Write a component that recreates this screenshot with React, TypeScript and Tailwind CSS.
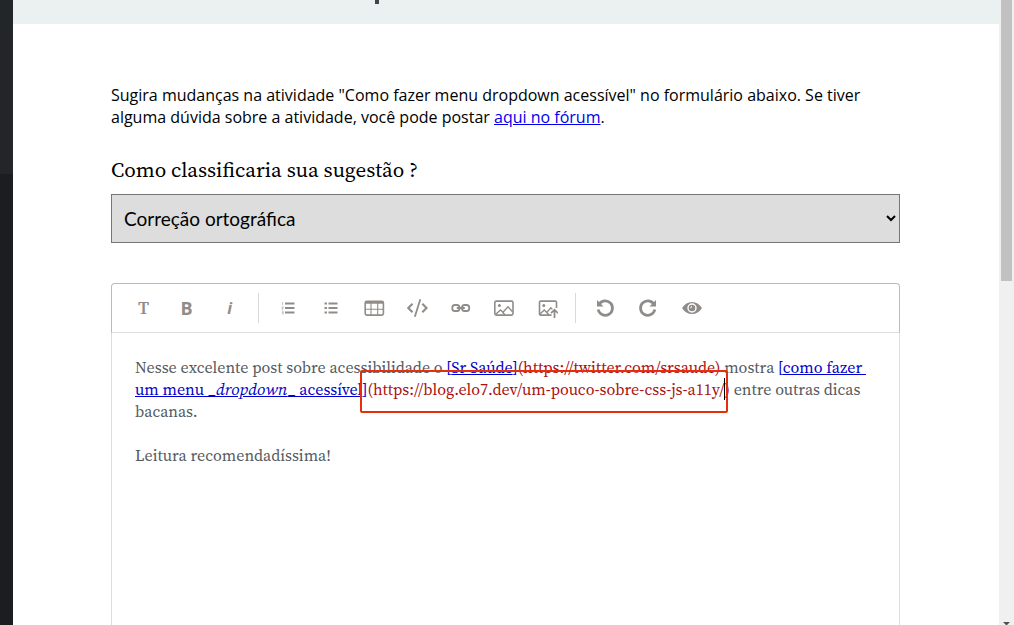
import type { ReactNode } from "react";

const serif = "font-['Source_Serif_Pro','Source_Serif_4','Liberation_Serif',serif]";

function Tool({ label, children }: { label: string; children: ReactNode }) {
  return (
    <button
      type="button"
      aria-label={label}
      className="flex h-[30px] w-[43px] shrink-0 items-center justify-center text-[#908c8a]"
    >
      {children}
    </button>
  );
}

function Icon({ children }: { children: ReactNode }) {
  return (
    <svg width="24" height="24" viewBox="0 0 24 24" fill="none" stroke="currentColor" strokeWidth="1.8" aria-hidden="true">
      {children}
    </svg>
  );
}

function Separator() {
  return <span className="mx-[7px] h-[30px] w-px shrink-0 bg-[#d9d9d9]" />;
}

function Toolbar() {
  return (
    <div
      role="toolbar"
      aria-label="Formatação"
      className="flex h-[50px] items-center overflow-hidden rounded-t border border-[#bbbbbb] border-b-[#dddddd] pl-[10px]"
    >
      <Tool label="Título">
        <span className={`${serif} text-lg font-semibold`}>T</span>
      </Tool>
      <Tool label="Negrito">
        <span className="font-['Open_Sans',sans-serif] text-lg font-bold">B</span>
      </Tool>
      <Tool label="Itálico">
        <span className="font-['Open_Sans',sans-serif] text-base font-bold italic">i</span>
      </Tool>
      <Separator />
      <Tool label="Lista numerada">
        <Icon>
          <path d="M9 7.500h9.500M9 12h9.500M9 16.500h9.500" />
          <path d="M6.600 6v3M5.800 10.800h1.400v1.100H6v1.200h1.400M5.800 15h1.400v3H5.800M6 16.500h1.200" strokeWidth=".5" />
        </Icon>
      </Tool>
      <Tool label="Lista">
        <Icon>
          <path d="M9.500 7.500h9M9.500 12h9M9.500 16.500h9M5.500 7.500h2.500M5.500 12h2.500M5.500 16.500h2.500" />
        </Icon>
      </Tool>
      <Tool label="Tabela">
        <Icon>
          <rect x="3.200" y="5.300" width="18.200" height="13.800" rx="1.600" strokeWidth="1.600" />
          <path d="M3.500 6.500h17.600" strokeWidth="2.600" />
          <path d="M3.500 13.200h17.600M9 7v12M15.700 7v12" strokeWidth="1.100" />
        </Icon>
      </Tool>
      <Tool label="Código">
        <Icon>
          <path d="M7.500 7.800 3.300 12l4.200 4.200M17.300 7.800l4.200 4.200-4.200 4.200" strokeWidth="2.100" />
          <path d="M15.300 3.200 9.800 20.800" />
        </Icon>
      </Tool>
      <Tool label="Link">
        <Icon>
          <rect x="4.300" y="9" width="7.200" height="6" rx="2.600" />
          <rect x="14" y="9" width="7.200" height="6" rx="2.600" />
          <path d="M8.800 12h8" />
        </Icon>
      </Tool>
      <Tool label="Imagem">
        <Icon>
          <rect x="3.800" y="5.100" width="18.200" height="14" rx="1.600" strokeWidth="1.600" />
          <circle cx="8.400" cy="9.500" r="1.500" fill="currentColor" stroke="none" />
          <path d="m4.500 18.500 5-4.500 2.500 2.200 5-5.500 4.700 5.300M11.500 16l2.500 3" strokeWidth="1.400" />
        </Icon>
      </Tool>
      <Tool label="Enviar imagem">
        <Icon>
          <path d="M17.500 19.100H6.700a1.200 1.200 0 0 1-1.200-1.200V6.300a1.200 1.200 0 0 1 1.200-1.200h14.600a1.200 1.200 0 0 1 1.200 1.200V12" strokeWidth="1.600" />
          <circle cx="9.800" cy="9.500" r="1.500" fill="currentColor" stroke="none" />
          <path d="m6 18 4.300-4 2.500 2.500 4-4.700 1.500 1.500M12.500 16l2.500 3" strokeWidth="1.400" />
          <path d="M20.500 22v-8M17 17.200l3.500-3.500 3.500 3.500" />
        </Icon>
      </Tool>
      <span className="mr-[7px] ml-2 h-[30px] w-px shrink-0 bg-[#d9d9d9]" />
      <Tool label="Desfazer">
        <Icon>
          <path d="M6 8.500A7.200 7.200 0 1 1 5.200 13.500" strokeWidth="2.700" />
          <path d="M4 4v6.500h6.500z" fill="currentColor" stroke="none" />
        </Icon>
      </Tool>
      <Tool label="Refazer">
        <Icon>
          <path d="M18 8.500A7.200 7.200 0 1 0 18.800 13.500" strokeWidth="2.700" />
          <path d="M20 4v6.500h-6.500z" fill="currentColor" stroke="none" />
        </Icon>
      </Tool>
      <Tool label="Visualizar">
        <Icon>
          <path
            fill="currentColor"
            stroke="none"
            fillRule="evenodd"
            d="M3 12c2.500-4 6-6 10-6s7.500 2 10 6c-2.500 4-6 6-10 6s-7.500-2-10-6ZM13 7.300a4.700 4.700 0 1 0 0 9.400 4.700 4.700 0 0 0 0-9.400Z"
          />
          <circle cx="13" cy="12" r="3.300" fill="currentColor" stroke="none" />
          <path d="M13 10.500a1.600 1.600 0 0 0-1.300 1.600" stroke="white" strokeWidth="1" />
        </Icon>
      </Tool>
    </div>
  );
}

function Editor() {
  return (
    <div
      role="textbox"
      aria-multiline="true"
      aria-label="Sua sugestão"
      className={`${serif} grow border-x border-[#dddddd] px-[23px] pt-[23px] text-base leading-[22px] text-[#535a60]`}
    >
      <p className="whitespace-nowrap">
        Nesse excelente post sobre acessibilidade o <span className="text-[#0000cc]">[<u>Sr Saúde</u>]</span>
        <span className="text-[#aa1111]">(https://twitter.com/srsaude)</span> mostra{" "}
        <span className="text-[#0000cc]">[<u>como fazer&nbsp;</u></span>
        <br />
        <span className="text-[#0000cc]">
          <u>um menu _<em className="text-[17px]">dropdown</em>_ acessível</u>
        </span>
        <span className="relative text-[#aa1111]">
          <span className="text-[#0000cc]">]</span>(https://blog.elo7.dev/um-pouco-sobre-css-js-a11y/
          <span className="absolute top-0 right-0 h-[22px] w-px bg-black" />
          <span className="absolute -top-2 -right-[3px] -left-[2px] h-[43px] rounded-xs border-2 border-[#e62e0c]" />
        </span>
        <span className="text-[#aa1111]">)</span> entre outras dicas
        <br />
        bacanas.
      </p>
      <p className="mt-[22px]">Leitura recomendadíssima!</p>
    </div>
  );
}

export default function App() {
  return (
    <div className="flex h-screen overflow-hidden bg-white">
      <aside className="flex w-[13px] shrink-0 flex-col bg-[#1a1e20]">
        <div className="h-[174px] bg-[#222629]" />
      </aside>
      <main className="flex min-w-0 grow flex-col">
        <header className="h-6 shrink-0 bg-[#ebf0f1] pl-[362px]">
          <div className="h-1 w-1 bg-[#3d464d]" />
        </header>
        <form className="flex grow flex-col pt-[60px] pr-[99px] pl-[98px]">
          <p className="font-['Open_Sans',sans-serif] text-base leading-[22px] text-black">
            Sugira mudanças na atividade "Como fazer menu dropdown acessível" no formulário abaixo. Se tiver alguma dúvida
            sobre a atividade, você pode postar{" "}
            <a href="#forum" className="text-[#0000ee] underline">aqui no fórum</a>.
          </p>
          <label htmlFor="tipo" className={`${serif} mt-[26px] text-[21px] leading-[32px] text-black`}>
            Como classificaria sua sugestão ?
          </label>
          <select
            id="tipo"
            className="mt-2 h-[49px] w-full shrink-0 border border-[#767676] bg-[#dddddd] pl-2 font-['Lato',sans-serif] text-[19px] text-black"
          >
            <option>Correção ortográfica</option>
          </select>
          <div className="mt-10 flex grow flex-col">
            <Toolbar />
            <Editor />
          </div>
        </form>
      </main>
      <div aria-hidden="true" className="flex w-[15px] shrink-0 flex-col items-center justify-between bg-[#f0f0f0]">
        <div className="h-[281px] w-[11px] bg-[#c1c1c1]" />
        <svg width="7" height="3" viewBox="0 0 7 3" fill="#505050">
          <path d="M0 0h7L4 3H3z" />
        </svg>
      </div>
    </div>
  );
}
